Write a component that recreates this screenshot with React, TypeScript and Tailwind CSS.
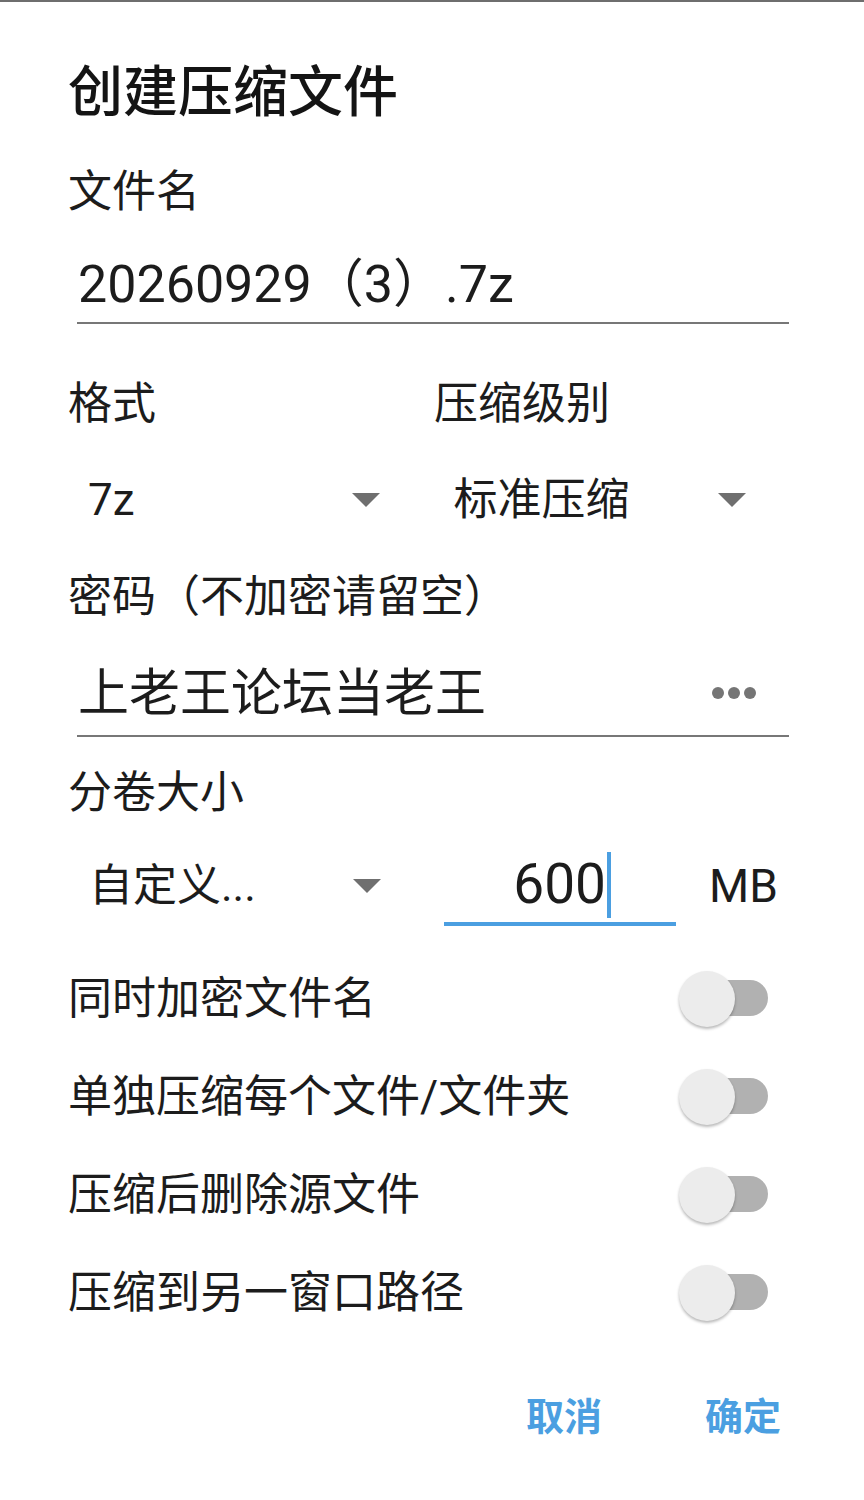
import React from "react";

const FONT = "font-['Roboto','Noto_Sans_CJK_SC',sans-serif]";

function Caret() {
  return (
    <svg width="28" height="14" viewBox="0 0 28 14" className="shrink-0">
      <polygon points="0,0 28,0 14,14" fill="#6f6f6f" />
    </svg>
  );
}

function Dropdown({ value, className = "" }: { value: string; className?: string }) {
  return (
    <div className={`flex h-[60px] w-[366px] items-center pl-[20px] ${className}`}>
      <div className="w-[264px] text-[44px] leading-none text-[#1c1c1c]">{value}</div>
      <Caret />
    </div>
  );
}

function Toggle() {
  return (
    <div className="relative h-[56px] w-[89px] shrink-0">
      <div className="absolute left-[18px] top-[9px] h-[36px] w-[71px] rounded-full bg-[#b1b1b1]" />
      <div className="absolute left-0 top-0 h-[56px] w-[56px] rounded-full bg-[#ececec] shadow-[0_2px_3px_rgba(0,0,0,0.28)]" />
    </div>
  );
}

function ToggleRow({ label }: { label: string }) {
  return (
    <div className="flex h-[98px] items-center justify-between pr-[21px]">
      <span className="text-[44px] leading-none text-[#1c1c1c]">{label}</span>
      <Toggle />
    </div>
  );
}

export default function App() {
  return (
    <div className={`h-[1500px] w-[864px] overflow-hidden bg-white ${FONT}`}>
      <div className="h-[2px] w-full bg-[#6e6e6e]" />
      <div className="flex flex-col pl-[68px] pr-[75px]">
        {/* title */}
        <div className="mt-[60px] flex h-[60px] items-center text-[55px] font-medium leading-none text-[#141414]">
          创建压缩文件
        </div>

        {/* file name */}
        <div className="mt-[45px] flex h-[50px] items-center text-[44px] leading-none text-[#1c1c1c]">
          文件名
        </div>
        <div className="ml-[9px] mt-[38px] flex h-[60px] items-center pl-[1px] text-[52px] leading-none text-[#1c1c1c]">
          20260929（3）.7z
        </div>
        <div className="ml-[9px] mt-[7px] h-[2px] bg-[#777777]" />

        {/* format + level */}
        <div className="mt-[55px] flex h-[50px] items-center text-[44px] leading-none text-[#1c1c1c]">
          <span className="w-[366px]">格式</span>
          <span>压缩级别</span>
        </div>
        <div className="mt-[41px] flex">
          <Dropdown value="7z" />
          <Dropdown value="标准压缩" className="ml-[10px]" />
        </div>

        {/* password */}
        <div className="mt-[42px] flex h-[50px] items-center text-[44px] leading-none text-[#1c1c1c]">
          密码（不加密请留空）
        </div>
        <div className="ml-[9px] mt-[41px] flex h-[60px] items-center justify-between pl-[1px] pr-[33px]">
          <span className="text-[51px] leading-none text-[#1c1c1c]">上老王论坛当老王</span>
          <div className="flex gap-[4px]">
            <span className="h-[12px] w-[12px] rounded-full bg-[#757575]" />
            <span className="h-[12px] w-[12px] rounded-full bg-[#757575]" />
            <span className="h-[12px] w-[12px] rounded-full bg-[#757575]" />
          </div>
        </div>
        <div className="ml-[9px] mt-[12px] h-[2px] bg-[#777777]" />

        {/* volume size */}
        <div className="mt-[31px] flex h-[50px] items-center text-[44px] leading-none text-[#1c1c1c]">
          分卷大小
        </div>
        <div className="mt-[27px] flex h-[81px] items-center">
          <div className="flex w-[366px] items-center pl-[21px]">
            <div className="w-[264px] text-[44px] leading-none text-[#1c1c1c]">自定义...</div>
            <Caret />
          </div>
          <div className="ml-[10px] flex h-[81px] w-[232px] items-center justify-end border-b-[4px] border-[#4b9fe1] pr-[65px] pt-[2px]">
            <span className="text-[55px] leading-none text-[#1c1c1c]">600</span>
            <span className="ml-[1px] h-[66px] w-[4px] bg-[#4b9fe1]" />
          </div>
          <span className="ml-[33px] text-[46px] leading-none text-[#1c1c1c]">MB</span>
        </div>

        {/* switches */}
        <div className="mt-[24px] flex flex-col">
          <ToggleRow label="同时加密文件名" />
          <ToggleRow label="单独压缩每个文件/文件夹" />
          <ToggleRow label="压缩后删除源文件" />
          <ToggleRow label="压缩到另一窗口路径" />
        </div>

        {/* actions */}
        <div className="mt-[50px] flex h-[50px] items-center justify-end gap-[103px] pr-[8px] text-[38px] font-bold leading-none text-[#4b9fe1]">
          <span>取消</span>
          <span>确定</span>
        </div>
      </div>
    </div>
  );
}
